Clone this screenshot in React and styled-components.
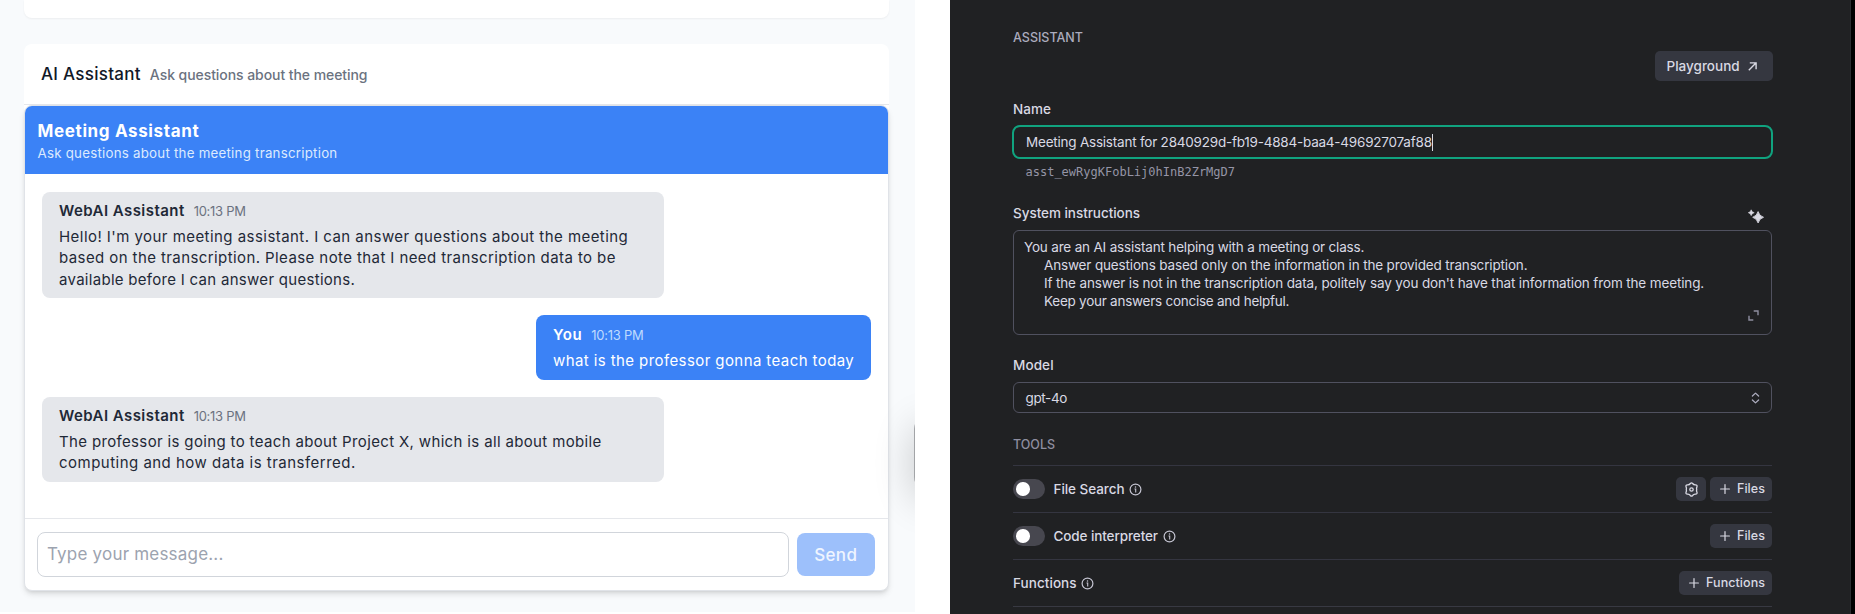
import React from "react";
import styled, { createGlobalStyle } from "styled-components";

const Global = createGlobalStyle`
  * { box-sizing: border-box; }
  body { margin: 0; background: #fff; font-family: Inter, "Liberation Sans", sans-serif; overflow: hidden; }
`;

const Page = styled.div`
  display: flex;
  width: 1855px;
  height: 614px;
  overflow: hidden;
  background: #fff;
`;

const Text = styled.span`
  display: block;
  white-space: pre;
  font-size: ${(p) => p.$size}px;
  font-weight: ${(p) => p.$weight || 400};
  letter-spacing: ${(p) => p.$ls || 0}px;
  line-height: ${(p) => p.$lh || 20}px;
  color: ${(p) => p.$color || "inherit"};
`;

/* Meeting chat */
const ChatPage = styled.section`
  position: relative;
  display: flex;
  flex-direction: column;
  width: 915px;
  height: 612px;
  padding: 0 26px 0 24px;
  background: #f8fafc;
  overflow: hidden;
`;
const PreviousCard = styled.div`
  height: 18px;
  flex: none;
  border-radius: 0 0 8px 8px;
  background: #fff;
  box-shadow: 0 1px 2px rgba(0, 0, 0, 0.05);
`;
const Card = styled.div`
  margin-top: 26px;
  height: 547px;
  display: flex;
  flex-direction: column;
  border-radius: 8px;
  background: #fff;
`;
const CardHeader = styled.div`
  display: flex;
  align-items: baseline;
  gap: 9px;
  height: 61px;
  flex: none;
  padding: 20px 17px 0;
  border-bottom: 1px solid #e5e7eb;
`;
const Widget = styled.div`
  flex: 1;
  display: flex;
  flex-direction: column;
  border: 1px solid #e0e3e8;
  border-radius: 8px;
  overflow: hidden;
  background: #fff;
  box-shadow: 0 4px 6px -1px rgba(0, 0, 0, 0.12), 0 2px 4px -2px rgba(0, 0, 0, 0.12);
`;
const Banner = styled.div`
  height: 68px;
  flex: none;
  padding: 14px 12.5px 0;
  background: #3b82f6;
`;
const Messages = styled.div`
  flex: 1;
  display: flex;
  flex-direction: column;
  gap: 17px;
  padding: 17.6px 17px 0 17px;
`;
const Bubble = styled.article`
  align-self: ${(p) => (p.$mine ? "flex-end" : "flex-start")};
  width: ${(p) => (p.$mine ? 335 : 622)}px;
  padding: 8.6px 17px 8.4px;
  border-radius: 8px;
  background: ${(p) => (p.$mine ? "#3b82f6" : "#e5e7eb")};
  color: ${(p) => (p.$mine ? "#fff" : "#1f2937")};
`;
const BubbleHead = styled.div`
  display: flex;
  align-items: baseline;
  gap: 9px;
  height: 21.35px;
  margin-bottom: 4.5px;
`;
const Composer = styled.form`
  display: flex;
  align-items: center;
  gap: 8px;
  height: 72px;
  flex: none;
  padding: 0 13px 0 12px;
  border-top: 1px solid #e5e7eb;
`;
const MessageBox = styled.div`
  flex: 1;
  height: 45px;
  padding: 11px 9px;
  border: 1px solid #d1d5db;
  border-radius: 8px;
`;
const SendButton = styled.div`
  display: flex;
  align-items: center;
  justify-content: center;
  width: 78.5px;
  height: 43.5px;
  border-radius: 8px;
  background: #9dc0fb;
`;
const FloatingTab = styled.div`
  position: absolute;
  left: 914px;
  top: 417px;
  width: 60px;
  height: 72px;
  border-radius: 12px;
  background: #a2a4a7;
  box-shadow: 0 10px 40px rgba(0, 0, 0, 0.2);
`;

/* Assistant settings */
const Panel = styled.section`
  width: 900px;
  height: 614px;
  margin-left: 35px;
  padding: 30px 78px 0 63px;
  background: #202123;
  color: #d9d9e3;
  overflow: hidden;
`;
const Edge = styled.div`
  flex: 1;
  border-left: 1px solid #2b2c30;
  background: #000;
`;
const PlaygroundRow = styled.div`
  display: flex;
  justify-content: flex-end;
  margin: 5px -1px 18px 0;
`;
const PlaygroundButton = styled.div`
  display: flex;
  align-items: center;
  gap: 8px;
  width: 118.5px;
  height: 30px;
  padding-left: 12px;
  border-radius: 5px;
  background: #353740;
`;
const NameInput = styled.div`
  display: flex;
  align-items: center;
  height: 34px;
  margin: 6px -1px 5px;
  padding-left: 12px;
  border: 2px solid #10a37f;
  border-radius: 8px;
`;
const Caret = styled.i`
  width: 1px;
  height: 17px;
  background: #d9d9e3;
`;
const AssistantId = styled.div`
  height: 16px;
  padding-left: 12.5px;
  font: 12px/16px "DejaVu Sans Mono", monospace;
  color: #9595a6;
`;
const LabelRow = styled.div`
  display: flex;
  justify-content: space-between;
  height: 20px;
  margin-top: ${(p) => p.$top}px;
  padding-right: 6px;
`;
const Instructions = styled.div`
  display: flex;
  justify-content: space-between;
  align-items: flex-end;
  height: 104.5px;
  margin-top: 7px;
  padding: 7px 12px 13px 10px;
  border: 1px solid #50515f;
  border-radius: 6px;
`;
const Lines = styled.div`
  align-self: flex-start;
`;
const Indent = styled.div`
  padding-left: 20px;
`;
const Select = styled.div`
  display: flex;
  align-items: center;
  justify-content: space-between;
  height: 31px;
  margin: 7px 0 24px;
  padding: 0 11px 0 11.5px;
  border: 1px solid #50515f;
  border-radius: 6px;
`;
const Tools = styled.div`
  margin-top: 12px;
  border-bottom: 1px solid #383942;
`;
const ToolRow = styled.div`
  display: flex;
  align-items: center;
  height: 47px;
  border-top: 1px solid #343540;
`;
const Toggle = styled.div`
  width: 32px;
  height: 19.5px;
  margin-right: 8.5px;
  padding: 3px;
  border-radius: 10px;
  background: #47474f;
  &::before {
    content: "";
    display: block;
    width: 13.5px;
    height: 13.5px;
    border-radius: 50%;
    background: #fff;
  }
`;
const InfoIcon = styled.svg`
  display: block;
  margin-left: 4.5px;
`;
const Actions = styled.div`
  display: flex;
  gap: 4px;
  margin-left: auto;
`;
const SmallButton = styled.div`
  display: flex;
  align-items: center;
  gap: 7px;
  width: ${(p) => p.$w}px;
  height: 24px;
  padding-left: ${(p) => p.$pad}px;
  border-radius: 5px;
  background: #353740;
`;

const Info = () => (
  <InfoIcon width="13" height="13" viewBox="0 0 13 13" fill="none" stroke="#c5c5d2">
    <circle cx="6.5" cy="6.5" r="5.4" strokeWidth="1.2" />
    <path d="M5.5 6h1.2v3.4" strokeWidth="1.1" />
    <circle cx="6.5" cy="4" r="0.75" fill="#c5c5d2" stroke="none" />
  </InfoIcon>
);
const Plus = () => (
  <svg width="10" height="10" viewBox="0 0 10 10" stroke="#d9d9e3" strokeWidth="1.2" strokeLinecap="round">
    <path d="M5 .6v8.8M.6 5h8.8" />
  </svg>
);
const Gear = () => (
  <svg width="15" height="15" viewBox="0 0 15 15" fill="none" stroke="#d9d9e3" strokeWidth="1.3" strokeLinejoin="round">
    <path d="M6.4 1.5Q7.5.2 8.6 1.5Q9.7 3 11.6 2.8Q13.4 2.9 13 4.6Q12.2 6 12.7 7.5Q12.2 9 13 10.4Q13.4 12.1 11.6 12.2Q9.7 12 8.6 13.5Q7.5 14.8 6.4 13.5Q5.3 12 3.4 12.2Q1.6 12.1 2 10.4Q2.8 9 2.3 7.5Q2.8 6 2 4.6Q1.6 2.9 3.4 2.8Q5.3 3 6.4 1.5Z" />
    <circle cx="7.5" cy="7.5" r="1.7" />
  </svg>
);

const Message = ({ mine, author, nameSpacing, lines }) => (
  <Bubble $mine={mine}>
    <BubbleHead>
      <Text $size={15} $weight={600} $ls={nameSpacing} $lh={21.35}>{author}</Text>
      <Text $size={13} $ls={-0.26} $lh={21.35} $color={mine ? "#bfdbfe" : "#6b7280"}>10:13 PM</Text>
    </BubbleHead>
    {lines.map(([line, ls]) => (
      <Text key={line} $size={15} $ls={ls} $lh={21.35}>{line}</Text>
    ))}
  </Bubble>
);

const Files = () => (
  <SmallButton $w={62} $pad={10}>
    <Plus />
    <Text $size={12.5} $weight={500} $ls={0.03}>Files</Text>
  </SmallButton>
);

export default function App() {
  return (
    <Page>
      <Global />
      <ChatPage>
        <PreviousCard />
        <Card>
          <CardHeader>
            <Text $size={17} $weight={500} $ls={0.28} $color="#111827">AI Assistant</Text>
            <Text $size={14} $weight={500} $ls={-0.067} $color="#6b7280">Ask questions about the meeting</Text>
          </CardHeader>
          <Widget>
            <Banner>
              <Text $size={17} $weight={700} $ls={0.64} $lh={23} $color="#fff">Meeting Assistant</Text>
              <Text $size={13.3} $ls={0.24} $lh={20} $color="#dbeafe">Ask questions about the meeting transcription</Text>
            </Banner>
            <Messages>
              <Message
                author="WebAI Assistant"
                nameSpacing={0.44}
                lines={[
                  ["Hello! I'm your meeting assistant. I can answer questions about the meeting", 0.45],
                  ["based on the transcription. Please note that I need transcription data to be", 0.41],
                  ["available before I can answer questions.", 0.29],
                ]}
              />
              <Message mine author="You" nameSpacing={0.6} lines={[["what is the professor gonna teach today", 0.41]]} />
              <Message
                author="WebAI Assistant"
                nameSpacing={0.44}
                lines={[
                  ["The professor is going to teach about Project X, which is all about mobile", 0.35],
                  ["computing and how data is transferred.", 0.48],
                ]}
              />
            </Messages>
            <Composer>
              <MessageBox>
                <Text $size={17} $ls={0.2} $lh={21} $color="#9ca3af">Type your message...</Text>
              </MessageBox>
              <SendButton>
                <Text $size={17} $weight={500} $ls={0.36} $color="#eff5ff">Send</Text>
              </SendButton>
            </Composer>
          </Widget>
        </Card>
        <FloatingTab />
      </ChatPage>

      <Panel>
        <Text $size={12.5} $weight={500} $lh={16} $color="#acacbe">ASSISTANT</Text>
        <PlaygroundRow>
          <PlaygroundButton>
            <Text $size={13.5} $weight={500}>Playground</Text>
            <svg width="9" height="9" viewBox="0 0 9 9" fill="none" stroke="#d9d9e3" strokeWidth="1.4">
              <path d="M.8 8.2L7.9 1.1M1.8.9h6.3v6.3" />
            </svg>
          </PlaygroundButton>
        </PlaygroundRow>
        <Text $size={13.5} $weight={500} $ls={0.03}>Name</Text>
        <NameInput>
          <Text $size={13.5} $ls={-0.22}>Meeting Assistant for 2840929d-fb19-4884-baa4-49692707af88</Text>
          <Caret />
        </NameInput>
        <AssistantId>asst_ewRygKFobLij0hInB2ZrMgD7</AssistantId>

        <LabelRow $top={23}>
          <Text $size={13.5} $weight={500} $ls={-0.04}>System instructions</Text>
          <svg width="18" height="20" viewBox="0 0 18 20" fill="#d9d9e3">
            <path d="M10 8Q11.3 13 16 14.3Q11.3 15.6 10 20.6Q8.700 15.600 4 14.300Q8.700 13 10 8Z" stroke="#d9d9e3" strokeWidth="1" transform="translate(1.1 1.4) scale(.9)" />
            <path d="M3.200 6.800Q3.700 9.200 6.200 9.700Q3.700 10.200 3.200 12.600Q2.700 10.200.3 9.700Q2.700 9.200 3.200 6.800Z" stroke="#d9d9e3" strokeWidth=".6" />
          </svg>
        </LabelRow>
        <Instructions>
          <Lines>
            <Text $size={13.5} $ls={-0.18} $lh={18}>You are an AI assistant helping with a meeting or class.</Text>
            <Indent>
              <Text $size={13.5} $ls={-0.155} $lh={18}>Answer questions based only on the information in the provided transcription.</Text>
              <Text $size={13.5} $ls={-0.14} $lh={18}>If the answer is not in the transcription data, politely say you don't have that information from the meeting.</Text>
              <Text $size={13.5} $ls={-0.25} $lh={18}>Keep your answers concise and helpful.</Text>
            </Indent>
          </Lines>
          <svg width="11" height="11" viewBox="0 0 11 11" fill="none" stroke="#8e8ea0" strokeWidth="1.4">
            <path d="M5.700 1h4.300v4.300M1 5.700v4.300h4.300" />
          </svg>
        </Instructions>

        <LabelRow $top={20.5}>
          <Text $size={13.5} $weight={500} $ls={0.1}>Model</Text>
        </LabelRow>
        <Select>
          <Text $size={13.5} $ls={-0.36}>gpt-4o</Text>
          <svg width="9" height="12" viewBox="0 0 9 12" fill="none" stroke="#acacbe" strokeWidth="1.3" strokeLinecap="round" strokeLinejoin="round">
            <path d="M1.400 4L4.500 1.100L7.600 4M1.400 8L4.500 10.900L7.600 8" />
          </svg>
        </Select>

        <Text $size={12.5} $weight={500} $lh={16} $color="#8e8ea0">TOOLS</Text>
        <Tools>
          <ToolRow>
            <Toggle />
            <Text $size={13.5} $weight={500} $ls={-0.06}>File Search</Text>
            <Info />
            <Actions>
              <SmallButton $w={30} $pad={7.5}><Gear /></SmallButton>
              <Files />
            </Actions>
          </ToolRow>
          <ToolRow>
            <Toggle />
            <Text $size={13.5} $weight={500} $ls={-0.1}>Code interpreter</Text>
            <Info />
            <Actions><Files /></Actions>
          </ToolRow>
          <ToolRow>
            <Text $size={13.5} $weight={500} $ls={0.06}>Functions</Text>
            <Info />
            <Actions>
              <SmallButton $w={93} $pad={10}>
                <Plus />
                <Text $size={12.5} $weight={500} $ls={0.08}>Functions</Text>
              </SmallButton>
            </Actions>
          </ToolRow>
        </Tools>
      </Panel>
      <Edge />
    </Page>
  );
}
